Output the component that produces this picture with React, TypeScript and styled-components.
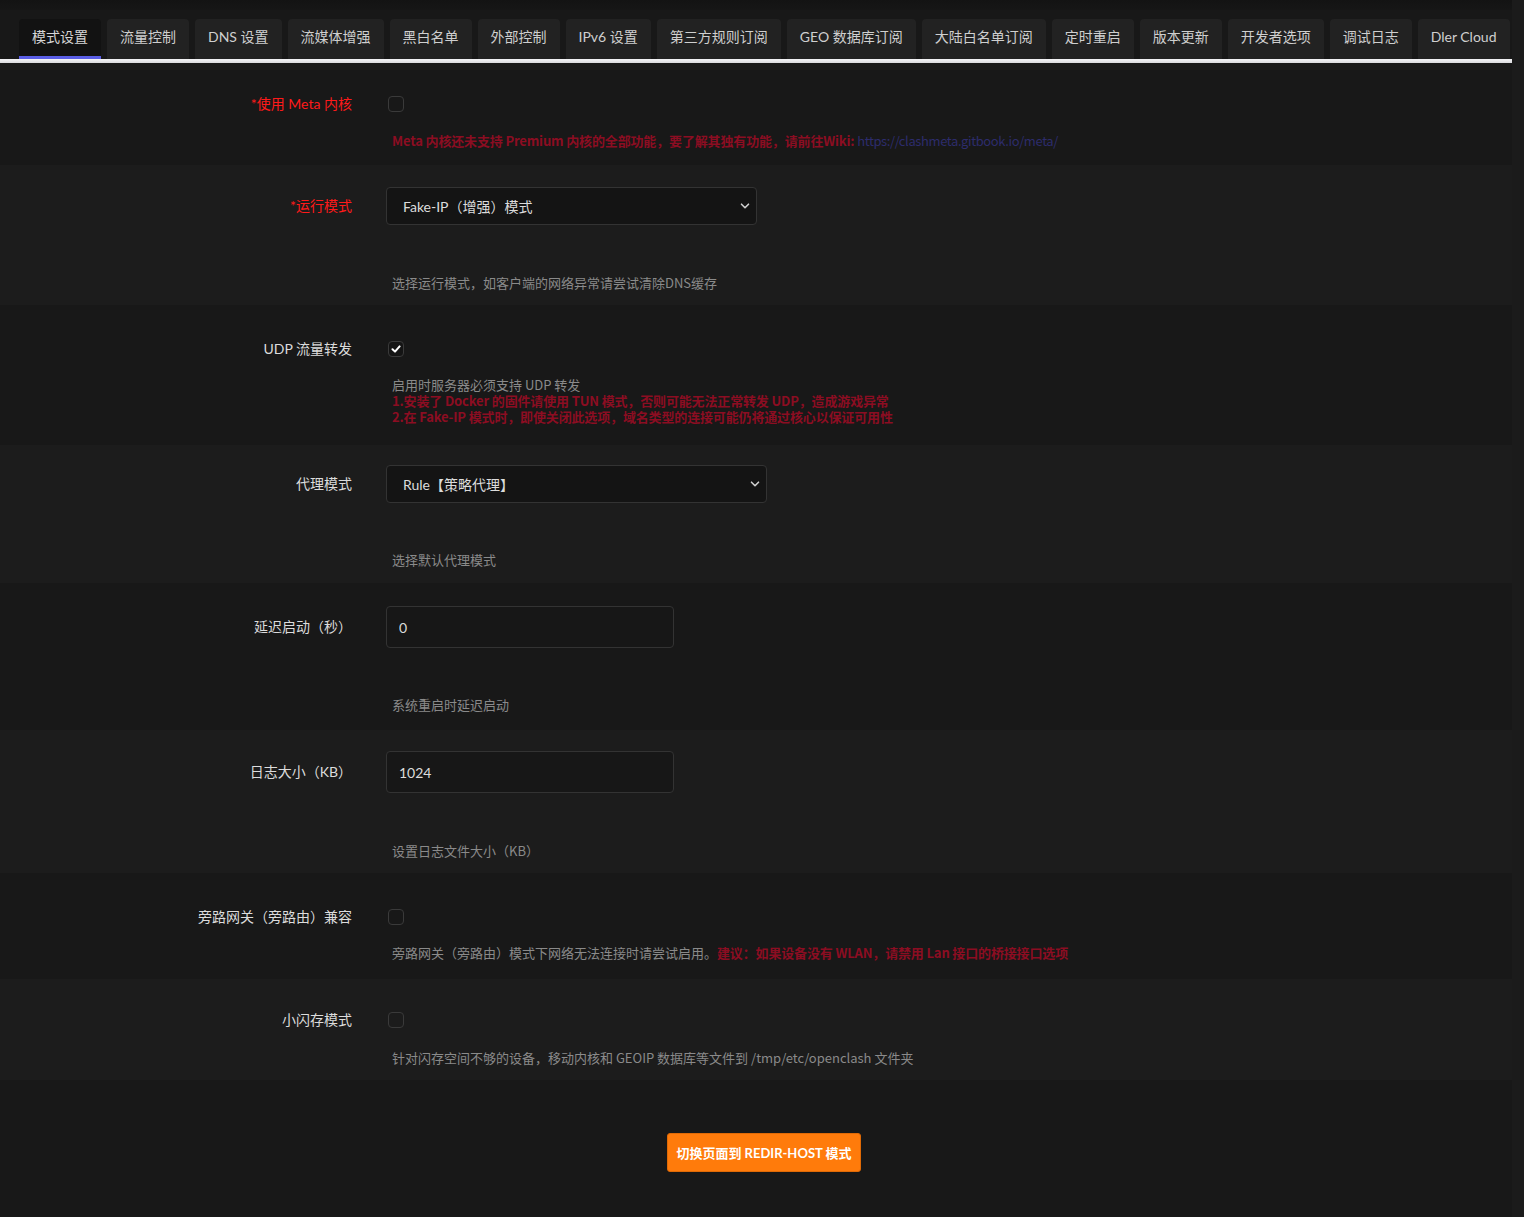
import React from "react";
import styled, { createGlobalStyle } from "styled-components";

const UI = `Lato, "Noto Sans CJK SC", sans-serif`;
const CJK = `"Noto Sans CJK SC", sans-serif`;

const Global = createGlobalStyle`
  html, body { margin: 0; padding: 0; background: #1b1b1b; }
  body { font-family: ${UI}; color: #dcdcdc; }
  * { box-sizing: border-box; }
`;

const Page = styled.div`
  width: 1512px;
  min-height: 1217px;
  background: #181818;
  display: flex;
  flex-direction: column;
`;

const TopStrip = styled.div`
  height: 10px;
  background: linear-gradient(#131313, #161616);
`;

const TabBar = styled.div`
  display: flex;
  gap: 6px;
  padding: 9px 0 0 19px;
  height: 49px;
  align-items: flex-end;
`;

const Tab = styled.div<{ $active?: boolean }>`
  height: 40px;
  padding: 0 13px 2px;
  display: flex;
  align-items: center;
  font-size: 14px;
  line-height: 20px;
  color: ${(p) => (p.$active ? "#d6d6d6" : "#cfcfcf")};
  background: ${(p) => (p.$active ? "#121212" : "#222222")};
  border-radius: 4px 4px 0 0;
  border-bottom: 3px solid ${(p) => (p.$active ? "#5a5ee6" : "transparent")};
  white-space: nowrap;
`;

const WhiteBar = styled.div`
  height: 4px;
  background: linear-gradient(#f4f4f6, #d9d9dc);
`;

const Row = styled.div<{ $alt?: boolean; $pt: number; $pb: number }>`
  background: ${(p) => (p.$alt ? "#1c1c1c" : "#181818")};
  padding: ${(p) => p.$pt}px 0 ${(p) => p.$pb}px 0;
`;

const FieldLine = styled.div`
  display: grid;
  grid-template-columns: 352px 1fr;
  column-gap: 34px;
  align-items: center;
  min-height: 20px;
`;

const Label = styled.div<{ $required?: boolean }>`
  text-align: right;
  font-size: 14px;
  line-height: 20px;
  color: ${(p) => (p.$required ? "#ff1a1a" : "#dcdcdc")};
`;

const Desc = styled.div<{ $mt: number }>`
  margin: ${(p) => p.$mt}px 0 0 392px;
  font-family: ${CJK};
  font-size: 13px;
  line-height: 16px;
  color: #8a8a8a;
`;

const Red = styled.span`
  color: #8c0d22;
  font-weight: 700;
  letter-spacing: -0.15px;
`;

const Link = styled.span`
  color: #2d2c6c;
  letter-spacing: -0.4px;
`;

const Box = styled.div<{ $checked?: boolean }>`
  width: 16px;
  height: 16px;
  margin-left: 2px;
  border: 1px solid #3a3a3a;
  border-radius: 4px;
  background: ${(p) => (p.$checked ? "#141414" : "transparent")};
  display: flex;
  align-items: center;
  justify-content: center;
`;

const SelectBox = styled.div<{ $w: number }>`
  position: relative;
  width: ${(p) => p.$w}px;
  height: 38px;
  border: 1px solid #333;
  border-radius: 4px;
  background: #141414;
  display: flex;
  align-items: center;
  padding-left: 16px;
  font-size: 14px;
  color: #dcdcdc;
`;

const Chevron = styled.svg`
  position: absolute;
  right: 6px;
  top: 13px;
`;

const Input = styled.input`
  width: 288px;
  height: 42px;
  border: 1px solid #333;
  border-radius: 4px;
  background: #171717;
  padding: 0 12px;
  font-family: ${UI};
  font-size: 14px;
  color: #dcdcdc;
  outline: none;
`;

const Footer = styled.div`
  flex: 1;
  display: flex;
  justify-content: center;
  align-items: flex-start;
  padding: 53px 0 0 16px;
`;

const Button = styled.button`
  height: 39px;
  padding: 0 8px;
  background: #ff7b0b;
  border: 1px solid #e06a06;
  border-radius: 3px;
  color: #ffffff;
  font-family: ${UI};
  font-size: 13px;
  font-weight: 700;
`;

const tabs = [
  "模式设置",
  "流量控制",
  "DNS 设置",
  "流媒体增强",
  "黑白名单",
  "外部控制",
  "IPv6 设置",
  "第三方规则订阅",
  "GEO 数据库订阅",
  "大陆白名单订阅",
  "定时重启",
  "版本更新",
  "开发者选项",
  "调试日志",
  "Dler Cloud",
];

const Check = ({ checked }: { checked?: boolean }) => (
  <Box $checked={checked}>
    {checked && (
      <svg width="10" height="10" viewBox="0 0 10 10">
        <path d="M1.5 5.2 L4 7.6 L8.6 2.4" stroke="#fff" strokeWidth="2" fill="none" strokeLinecap="round" strokeLinejoin="round" />
      </svg>
    )}
  </Box>
);

const Select = ({ w, value }: { w: number; value: string }) => (
  <SelectBox $w={w}>
    {value}
    <Chevron width="10" height="10" viewBox="0 0 10 10">
      <path d="M1.5 3.2 L5 6.7 L8.5 3.2" stroke="#d0d0d0" strokeWidth="1.6" fill="none" strokeLinecap="round" strokeLinejoin="round" />
    </Chevron>
  </SelectBox>
);

export default function App() {
  return (
    <>
      <Global />
      <Page>
        <TopStrip />
        <TabBar>
          {tabs.map((t, i) => (
            <Tab key={t} $active={i === 0}>
              {t}
            </Tab>
          ))}
        </TabBar>
        <WhiteBar />

        <Row $pt={31} $pb={16}>
          <FieldLine>
            <Label $required>*使用 Meta 内核</Label>
            <Check />
          </FieldLine>
          <Desc $mt={19}>
            <Red>Meta 内核还未支持 Premium 内核的全部功能，要了解其独有功能，请前往Wiki: </Red>
            <Link>https://clashmeta.gitbook.io/meta/</Link>
          </Desc>
        </Row>

        <Row $alt $pt={22} $pb={14}>
          <FieldLine>
            <Label $required>*运行模式</Label>
            <Select w={371} value="Fake-IP（增强）模式" />
          </FieldLine>
          <Desc $mt={50}>选择运行模式，如客户端的网络异常请尝试清除DNS缓存</Desc>
        </Row>

        <Row $pt={34} $pb={20}>
          <FieldLine>
            <Label>UDP 流量转发</Label>
            <Check checked />
          </FieldLine>
          <Desc $mt={18}>
            启用时服务器必须支持 UDP 转发
            <br />
            <Red>1.安装了 Docker 的固件请使用 TUN 模式，否则可能无法正常转发 UDP，造成游戏异常</Red>
            <br />
            <Red>2.在 Fake-IP 模式时，即使关闭此选项，域名类型的连接可能仍将通过核心以保证可用性</Red>
          </Desc>
        </Row>

        <Row $alt $pt={20} $pb={15}>
          <FieldLine>
            <Label>代理模式</Label>
            <Select w={381} value="Rule【策略代理】" />
          </FieldLine>
          <Desc $mt={49}>选择默认代理模式</Desc>
        </Row>

        <Row $pt={23} $pb={17}>
          <FieldLine>
            <Label>延迟启动（秒）</Label>
            <Input readOnly value="0" />
          </FieldLine>
          <Desc $mt={49}>系统重启时延迟启动</Desc>
        </Row>

        <Row $alt $pt={21} $pb={14}>
          <FieldLine>
            <Label>日志大小（KB）</Label>
            <Input readOnly value="1024" />
          </FieldLine>
          <Desc $mt={50}>设置日志文件大小（KB）</Desc>
        </Row>

        <Row $pt={34} $pb={18}>
          <FieldLine>
            <Label>旁路网关（旁路由）兼容</Label>
            <Check />
          </FieldLine>
          <Desc $mt={18}>
            旁路网关（旁路由）模式下网络无法连接时请尝试启用。
            <Red>建议：如果设备没有 WLAN，请禁用 Lan 接口的桥接接口选项</Red>
          </Desc>
        </Row>

        <Row $alt $pt={31} $pb={14}>
          <FieldLine>
            <Label>小闪存模式</Label>
            <Check />
          </FieldLine>
          <Desc $mt={20}>针对闪存空间不够的设备，移动内核和 GEOIP 数据库等文件到 /tmp/etc/openclash 文件夹</Desc>
        </Row>

        <Footer>
          <Button>切换页面到 REDIR-HOST 模式</Button>
        </Footer>
      </Page>
    </>
  );
}
